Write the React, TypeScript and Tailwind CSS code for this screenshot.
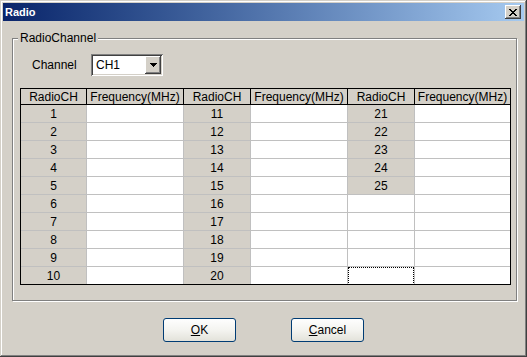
import React from 'react'

const font = { fontFamily: '"Liberation Sans", Arial, sans-serif' }

const colW = ['w-[66px]', 'w-[97px]', 'w-[67px]', 'w-[97px]', 'w-[67px]', 'w-[95px]']
const headers = ['RadioCH', 'Frequency(MHz)', 'RadioCH', 'Frequency(MHz)', 'RadioCH', 'Frequency(MHz)']

const raised =
  'bg-[#d4d0c8] shadow-[inset_-1px_-1px_#404040,inset_1px_1px_#ffffff,inset_-2px_-2px_#808080]'

function CloseButton() {
  return (
    <div className={`flex h-[14px] w-[16px] items-center justify-center ${raised}`}>
      <svg width="8" height="7" viewBox="0 0 8 7" shapeRendering="crispEdges">
        <path d="M0 0h2v1H0zM6 0h2v1H6zM1 1h2v1H1zM5 1h2v1H5zM2 2h4v1H2zM3 3h2v1H3zM2 4h4v1H2zM1 5h2v1H1zM5 5h2v1H5zM0 6h2v1H0zM6 6h2v1H6z" fill="#000" />
      </svg>
    </div>
  )
}

function ComboBox() {
  return (
    <div className="flex h-[22px] w-[72px] items-center bg-white p-[2px] shadow-[inset_1px_1px_#808080,inset_-1px_-1px_#ffffff,inset_2px_2px_#404040,inset_-2px_-2px_#d4d0c8]">
      <span className="flex-1 pl-[3px] text-[12px] leading-none">CH1</span>
      <div className={`flex h-[18px] w-[16px] items-center justify-center ${raised}`}>
        <svg width="7" height="4" viewBox="0 0 7 4" shapeRendering="crispEdges">
          <path d="M0 0h7v1H0zM1 1h5v1H1zM2 2h3v1H2zM3 3h1v1H3z" fill="#000" />
        </svg>
      </div>
    </div>
  )
}

function ChannelTable() {
  const rows = Array.from({ length: 10 }, (_, i) => [i + 1, i + 11, i < 5 ? i + 21 : null])
  return (
    <div className="w-[491px] border border-black bg-white text-[12px]">
      <div className="flex h-[16px] border-b border-black bg-[#d4d0c8]">
        {headers.map((h, c) => (
          <div
            key={c}
            className={`${colW[c]} flex items-center justify-center leading-none ${c < 5 ? 'border-r border-black' : ''}`}
          >
            {h}
          </div>
        ))}
      </div>
      {rows.map((r, i) => (
        <div key={i} className={`flex ${i < 9 ? 'h-[18px] border-b border-[#c0c0c0]' : 'h-[17px]'}`}>
          {[0, 1, 2, 3, 4, 5].map((c) => {
            const isCh = c % 2 === 0
            const val = isCh ? r[c / 2] : null
            const gray = isCh && val !== null
            const focus = i === 9 && c === 4
            return (
              <div
                key={c}
                className={`${colW[c]} flex items-center justify-center leading-none ${c < 5 ? 'border-r border-[#c0c0c0]' : ''} ${gray ? 'bg-[#d4d0c8]' : 'bg-white'}`}
              >
                {focus ? <div className="-ml-px h-[18px] w-full border border-dotted border-black" /> : val}
              </div>
            )
          })}
        </div>
      ))}
    </div>
  )
}

function XpButton({ children }: { children: React.ReactNode }) {
  return (
    <div className="flex h-[24px] w-[73px] items-center justify-center rounded-[3px] border border-[#003c74] bg-linear-to-b from-[#fefefe] via-[#f4f4f0] to-[#e3e2da] text-[12px] leading-none">
      {children}
    </div>
  )
}

export default function App() {
  return (
    <div
      style={font}
      className="flex h-[357px] w-[527px] flex-col bg-[#d4d0c8] p-[3px] text-black shadow-[inset_-1px_-1px_#404040,inset_1px_1px_#d4d0c8,inset_-2px_-2px_#808080,inset_2px_2px_#ffffff]"
    >
      {/* title bar */}
      <div className="flex h-[18px] items-center justify-between bg-linear-to-r from-[#0a246a] to-[#a6caf0] pl-[2px] pr-[3px]">
        <span className="text-[11px] font-bold leading-none text-white">Radio</span>
        <CloseButton />
      </div>

      {/* RadioChannel group */}
      <div className="relative ml-[9px] mt-[17px] h-[263px] w-[505px] border border-[#808080] shadow-[1px_1px_0_#ffffff,inset_1px_1px_0_#ffffff]">
        <span className="absolute -top-[8px] left-[5px] bg-[#d4d0c8] px-[2px] text-[12px] leading-[14px]">RadioChannel</span>
        <div className="flex flex-col px-[7px]">
          <div className="mt-[15px] flex h-[22px] items-center">
            <span className="ml-[12px] w-[59px] text-[12px] leading-none">Channel</span>
            <ComboBox />
          </div>
          <div className="mt-[12px]">
            <ChannelTable />
          </div>
        </div>
      </div>

      {/* buttons */}
      <div className="mt-[17px] flex justify-center gap-[55px]">
        <XpButton>
          <span className="underline">O</span>K
        </XpButton>
        <XpButton>
          <span className="underline">C</span>ancel
        </XpButton>
      </div>
    </div>
  )
}
